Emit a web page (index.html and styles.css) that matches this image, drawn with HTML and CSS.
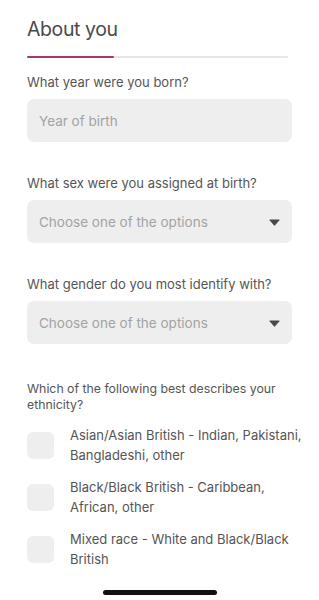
FILE: index.html
```html
<!DOCTYPE html>
<html>
<head>
<meta charset="utf-8">
<link rel="stylesheet" href="styles.css">
</head>
<body>
<div class="page">
  <h1 class="title">About you</h1>
  <div class="progress"><div class="progress-fill"></div></div>

  <div class="field first">
    <label class="label">What year were you born?</label>
    <div class="input"><span class="placeholder">Year of birth</span></div>
  </div>

  <div class="field">
    <label class="label">What sex were you assigned at birth?</label>
    <div class="input select"><span class="placeholder">Choose one of the options</span>
      <svg class="caret" width="11" height="7" viewBox="0 0 11 7"><path d="M1 0.5 H10 Q10.8 0.5 10.4 1.2 L6.1 6.3 Q5.5 7 4.9 6.3 L0.6 1.2 Q0.2 0.5 1 0.5 Z" fill="#484848"/></svg>
    </div>
  </div>

  <div class="field">
    <label class="label">What gender do you most identify with?</label>
    <div class="input select"><span class="placeholder">Choose one of the options</span>
      <svg class="caret" width="11" height="7" viewBox="0 0 11 7"><path d="M1 0.5 H10 Q10.8 0.5 10.4 1.2 L6.1 6.3 Q5.5 7 4.9 6.3 L0.6 1.2 Q0.2 0.5 1 0.5 Z" fill="#484848"/></svg>
    </div>
  </div>

  <div class="field ethnic">
    <label class="label">Which of the following best describes your ethnicity?</label>
    <div class="options">
      <div class="option"><span class="box"></span><span class="opt-text">Asian/Asian British - Indian, Pakistani, Bangladeshi, other</span></div>
      <div class="option"><span class="box"></span><span class="opt-text">Black/Black British - Caribbean, African, other</span></div>
      <div class="option"><span class="box"></span><span class="opt-text">Mixed race - White and Black/Black British</span></div>
    </div>
  </div>
</div>
<div class="home-indicator"></div>
</body>
</html>
```
FILE: styles.css
```css
html, body {
  margin: 0;
  padding: 0;
  background: #ffffff;
}
body {
  width: 319px;
  height: 600px;
  overflow: hidden;
  position: relative;
  font-family: Inter, "Liberation Sans", sans-serif;
  color: #555555;
}
.page {
  padding: 17px 27px 0 27px;
  display: flex;
  flex-direction: column;
}
.title {
  margin: 0;
  font-size: 19.5px;
  line-height: 24px;
  font-weight: 400;
  color: #4a4a4a;
  letter-spacing: -0.4px;
}
.progress {
  margin-top: 15px;
  height: 2px;
  width: 261px;
  background: #e6e6e6;
  border-radius: 1px;
}
.progress-fill {
  width: 87px;
  height: 2px;
  background: #a8386a;
  border-radius: 1px;
}
.field {
  display: flex;
  flex-direction: column;
  margin-top: 33px;
}
.field.first {
  margin-top: 16px;
}
.label {
  font-size: 13px;
  line-height: 16px;
  color: #555555;
  margin-bottom: 9px;
}
.input {
  height: 43px;
  background: #eeeeee;
  border-radius: 7px;
  display: flex;
  align-items: center;
  padding: 0 12px;
  box-sizing: border-box;
}
.placeholder {
  font-size: 13.5px;
  color: #a3a3a3;
  font-weight: 400;
}
.select {
  justify-content: space-between;
  padding-right: 12px;
}
.caret {
  display: block;
  margin-top: 2px;
}
.field.ethnic {
  margin-top: 37px;
}
.ethnic .label {
  font-size: 12.3px;
  line-height: 16px;
  margin-bottom: 13px;
}
.options {
  display: flex;
  flex-direction: column;
  gap: 13px;
  margin-right: -16px;
}
.option {
  display: flex;
  align-items: flex-start;
  gap: 16px;
}
.box {
  flex: none;
  width: 27px;
  height: 27px;
  border-radius: 6px;
  background: #eeeeee;
  margin-top: 6px;
}
.opt-text {
  font-size: 13px;
  line-height: 19.5px;
  color: #555555;
}
.home-indicator {
  position: absolute;
  left: 103px;
  top: 590px;
  width: 114px;
  height: 5px;
  border-radius: 3px;
  background: #111111;
}
```
